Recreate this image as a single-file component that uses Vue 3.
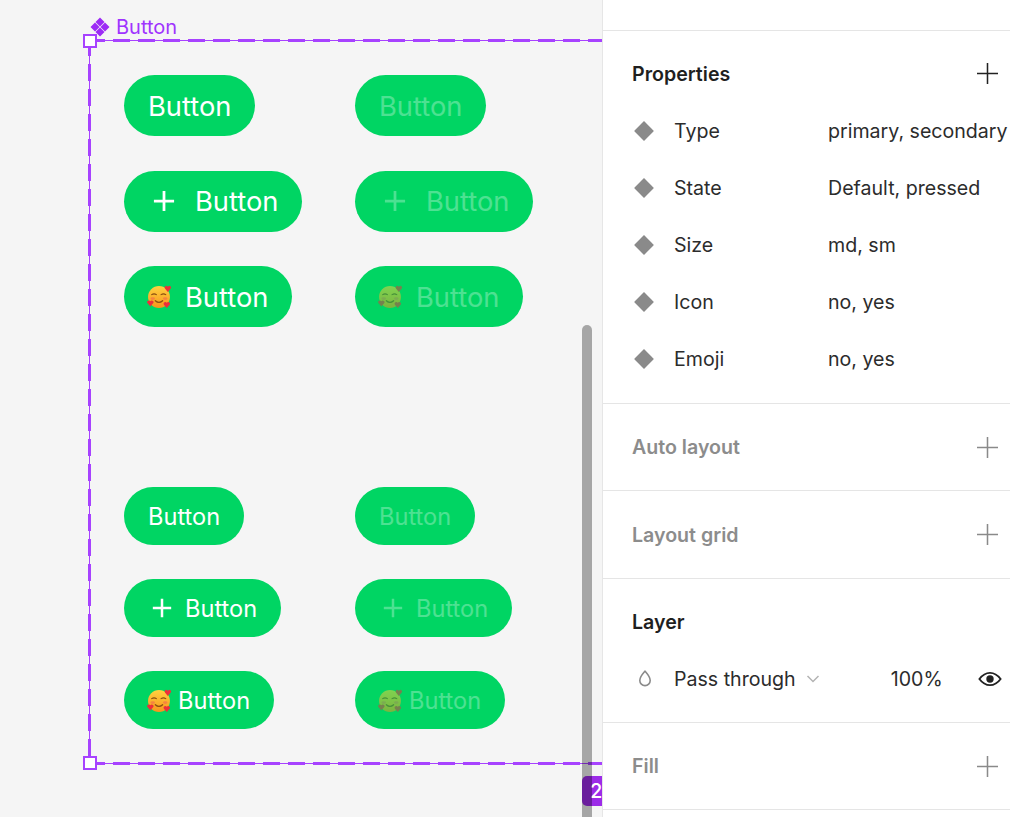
<template>
  <div class="app">
    <svg class="defs" width="0" height="0">
      <defs>
        <linearGradient id="face" x1="0" y1="0" x2="0" y2="1">
          <stop offset="0" stop-color="#ffd23f" />
          <stop offset="1" stop-color="#f7941d" />
        </linearGradient>
      </defs>
      <symbol id="emoji" viewBox="0 0 24 24">
        <circle cx="11.500" cy="12.500" r="10.500" fill="url(#face)" />
        <path d="M4.500 10.200q2.300-1.500 4.500 0M13.500 10.200q2.300-1.500 4.500 0" fill="none" stroke="#8a4f10" stroke-width="1.100" stroke-linecap="round" />
        <path d="M8 16q3.500 3.200 7 0" fill="none" stroke="#8a4f10" stroke-width="1.200" stroke-linecap="round" />
        <ellipse cx="5.500" cy="14" rx="2.200" ry="1.300" fill="#f5843f" />
        <ellipse cx="17.500" cy="14" rx="2.200" ry="1.300" fill="#f5843f" />
        <path transform="translate(20 4.500) scale(.85)" d="M0 3.600-3.300-.2a1.900 1.900 0 0 1 2.700-2.600l.6.6.6-.6a1.900 1.900 0 0 1 2.700 2.600z" fill="#ec2f3b" />
        <path transform="translate(3.200 18.500) scale(.85)" d="M0 3.600-3.300-.2a1.900 1.900 0 0 1 2.700-2.600l.6.6.6-.6a1.900 1.900 0 0 1 2.700 2.600z" fill="#ec2f3b" />
        <path transform="translate(19 20) scale(.85)" d="M0 3.600-3.300-.2a1.900 1.900 0 0 1 2.700-2.600l.6.6.6-.6a1.900 1.900 0 0 1 2.700 2.600z" fill="#ec2f3b" />
      </symbol>
    </svg>

    <div class="canvas">
      <div class="frame-label">
        <svg class="component-icon" viewBox="0 0 20 20">
          <path d="M10 .5l4.500 4.500L10 9.500 5.500 5zM5 5.500L9.500 10 5 14.500.5 10zM15 5.500l4.500 4.500-4.500 4.500L10.500 10zM10 10.500l4.500 4.500-4.500 4.500L5.500 15z" />
        </svg>
        <span>Button</span>
      </div>

      <div class="frame">
        <div class="buttons large">
          <div v-for="b in buttons" :key="'lg' + b.id" :class="['btn', { off: b.off }]">
            <svg v-if="b.icon === 'plus'" class="plus" viewBox="0 0 24 24">
              <path d="M12 1v22M1 12h22" />
            </svg>
            <svg v-if="b.icon === 'emoji'" class="emoji"><use href="#emoji" /></svg>
            <span class="btn-text">Button</span>
          </div>
        </div>
        <div class="buttons small">
          <div v-for="b in buttons" :key="'sm' + b.id" :class="['btn', { off: b.off }]">
            <svg v-if="b.icon === 'plus'" class="plus" viewBox="0 0 24 24">
              <path d="M12 1v22M1 12h22" />
            </svg>
            <svg v-if="b.icon === 'emoji'" class="emoji"><use href="#emoji" /></svg>
            <span class="btn-text">Button</span>
          </div>
        </div>
        <i class="handle top-left"></i>
        <i class="handle bottom-left"></i>
      </div>

      <div class="badge">2</div>
      <div class="scrollbar"></div>
    </div>

    <aside class="panel">
      <div class="top-strip"></div>

      <section class="section props">
        <div class="title-row">
          <span class="title">Properties</span>
          <svg class="add dark" viewBox="0 0 22 22"><path d="M11 0v22M0 11h22" /></svg>
        </div>
        <div v-for="p in properties" :key="p.name" class="prop-row">
          <i class="prop-diamond"></i>
          <span class="prop-name">{{ p.name }}</span>
          <span class="prop-value">{{ p.value }}</span>
        </div>
      </section>

      <section class="section collapsed">
        <span class="title muted">Auto layout</span>
        <svg class="add" viewBox="0 0 22 22"><path d="M11 0v22M0 11h22" /></svg>
      </section>

      <section class="section collapsed">
        <span class="title muted">Layout grid</span>
        <svg class="add" viewBox="0 0 22 22"><path d="M11 0v22M0 11h22" /></svg>
      </section>

      <section class="section layer">
        <div class="layer-title"><span class="title">Layer</span></div>
        <div class="layer-row">
          <svg class="drop" viewBox="0 0 16 20">
            <path d="M8 2.200c2.400 2.800 5.200 5.600 5.200 9.200a5.200 5.200 0 0 1-10.400 0c0-3.600 2.800-6.400 5.200-9.200z" />
          </svg>
          <span class="blend">Pass through</span>
          <svg class="chevron" viewBox="0 0 14 8"><path d="M1.500 1l5.500 5.500L12.500 1" /></svg>
          <span class="opacity">100%</span>
          <svg class="eye" viewBox="0 0 26 16">
            <path class="eye-line" d="M1.500 8C5 3.300 8.800 1.300 13 1.300S21 3.300 24.500 8C21 12.700 17.200 14.700 13 14.700S5 12.700 1.500 8z" />
            <circle cx="13" cy="8" r="4" />
          </svg>
        </div>
      </section>

      <section class="section collapsed last">
        <span class="title muted">Fill</span>
        <svg class="add" viewBox="0 0 22 22"><path d="M11 0v22M0 11h22" /></svg>
      </section>
    </aside>
  </div>
</template>

<script setup>
const buttons = [
  { id: 1, icon: null, off: false },
  { id: 2, icon: null, off: true },
  { id: 3, icon: 'plus', off: false },
  { id: 4, icon: 'plus', off: true },
  { id: 5, icon: 'emoji', off: false },
  { id: 6, icon: 'emoji', off: true }
]

const properties = [
  { name: 'Type', value: 'primary, secondary' },
  { name: 'State', value: 'Default, pressed' },
  { name: 'Size', value: 'md, sm' },
  { name: 'Icon', value: 'no, yes' },
  { name: 'Emoji', value: 'no, yes' }
]
</script>

<style>
html, body {
  margin: 0;
  overflow: hidden;
}
</style>

<style scoped>
.app {
  display: flex;
  width: 1010px;
  height: 817px;
  overflow: hidden;
  font-family: Inter, "Liberation Sans", sans-serif;
  background: #f5f5f5;
}

.defs {
  position: absolute;
}

.canvas {
  position: relative;
  flex: none;
  width: 602px;
  height: 817px;
  overflow: hidden;
  background: #f5f5f5;
}

.frame-label {
  position: absolute;
  left: 90px;
  top: 16px;
  display: flex;
  align-items: center;
  gap: 6px;
  color: #a033ff;
  font-size: 20px;
  line-height: 22px;
}

.component-icon {
  width: 20px;
  height: 20px;
  fill: #9c2bf5;
}

.frame {
  position: absolute;
  left: 88px;
  top: 39px;
  box-sizing: border-box;
  width: 560px;
  height: 726px;
  padding: 36px 0 0 36px;
}

/* thin selection line */
.frame::before {
  content: "";
  position: absolute;
  inset: 1px;
  border: 1px solid #a742ff;
}

/* thick dashes laid over the line */
.frame::after {
  content: "";
  position: absolute;
  inset: 0;
  background:
    linear-gradient(90deg, #a742ff 17px, transparent 17px) 0 0 / 25px 3px repeat-x,
    linear-gradient(90deg, #a742ff 17px, transparent 17px) 0 100% / 25px 3px repeat-x,
    linear-gradient(#a742ff 17px, transparent 17px) 0 0 / 3px 25px repeat-y;
}

.buttons {
  display: grid;
  grid-template-columns: 231px 231px;
  justify-items: start;
}

.large {
  row-gap: 34.5px;
  margin-bottom: 160px;
}

.small {
  row-gap: 34px;
}

.btn {
  display: flex;
  align-items: center;
  box-sizing: border-box;
  height: 61px;
  padding: 0 24px;
  border-radius: 31px;
  background: #00d563;
  color: #fff;
  font-size: 27.3px;
  line-height: 32px;
}

.btn-text {
  margin-top: 2px;
}

.large .btn {
  gap: 20px;
}

.small .btn {
  height: 58px;
  font-size: 23.6px;
  gap: 13px;
}

.large .btn:nth-child(n + 5) {
  gap: 13px;
}

.small .btn:nth-child(n + 5) {
  gap: 6px;
}

.plus {
  width: 22px;
  height: 22px;
  margin-left: 5px;
  fill: none;
  stroke: #fff;
  stroke-width: 3;
}

.small .plus {
  width: 20px;
  height: 20px;
  margin-left: 4px;
}

.emoji {
  flex: none;
  width: 25px;
  height: 25px;
  margin-left: -1px;
}

.off .btn-text,
.off .plus {
  opacity: 0.3;
}

.off .emoji {
  opacity: 0.5;
}

.handle {
  position: absolute;
  z-index: 1;
  box-sizing: border-box;
  width: 14px;
  height: 14px;
  background: #fff;
  border: 2px solid #a742ff;
}

.top-left {
  left: -5px;
  top: -5px;
}

.bottom-left {
  left: -5px;
  bottom: -5px;
}

.badge {
  position: absolute;
  left: 582px;
  top: 776px;
  width: 20px;
  height: 30px;
  padding-left: 8px;
  box-sizing: border-box;
  border-radius: 5px 0 0 5px;
  background: #9c2be8;
  color: #fff;
  font-size: 20px;
  font-weight: 500;
  line-height: 30px;
}

.scrollbar {
  position: absolute;
  left: 582px;
  top: 325px;
  width: 10px;
  height: 500px;
  border-radius: 5px;
  background: rgba(0, 0, 0, 0.32);
}

.panel {
  flex: 1;
  min-width: 0;
  background: #fff;
  border-left: 1px solid #e6e6e6;
  color: #2c2c2c;
}

.top-strip {
  height: 30px;
}

.section {
  box-sizing: border-box;
  border-top: 1px solid #e5e5e5;
  padding: 0 12px 0 29px;
}

.title {
  font-size: 19.6px;
  font-weight: 600;
  color: #1f1f1f;
}

.muted {
  color: #8c8c8c;
}

.props {
  height: 373px;
  padding-top: 14px;
}

.title-row,
.prop-row {
  display: flex;
  align-items: center;
  height: 57px;
}

.title-row {
  justify-content: space-between;
}

.add {
  flex: none;
  width: 21px;
  height: 21px;
  fill: none;
  stroke: #8a8a8a;
  stroke-width: 1.6;
}

.add.dark {
  stroke: #222;
}

.prop-row {
  font-size: 19.6px;
  white-space: nowrap;
}

.prop-diamond {
  flex: none;
  width: 14px;
  height: 14px;
  margin: 0 23px 0 5px;
  background: #8a8a8a;
  transform: rotate(45deg);
}

.prop-name {
  flex: none;
  width: 154px;
}

.collapsed {
  display: flex;
  align-items: center;
  justify-content: space-between;
  height: 87px;
}

.collapsed:nth-of-type(3) {
  height: 88px;
}

.collapsed.last {
  height: 88px;
  border-bottom: 1px solid #e5e5e5;
}

.layer {
  height: 144px;
  padding-top: 14px;
}

.layer-title {
  display: flex;
  align-items: center;
  height: 57px;
}

.layer-row {
  display: flex;
  align-items: center;
  height: 57px;
  font-size: 19.6px;
  white-space: nowrap;
}

.drop {
  flex: none;
  width: 16px;
  height: 20px;
  margin: 0 21px 0 5px;
  fill: none;
  stroke: #8a8a8a;
  stroke-width: 1.6;
}

.chevron {
  flex: none;
  width: 14px;
  height: 8px;
  margin-left: 10px;
  fill: none;
  stroke: #b3b3b3;
  stroke-width: 1.5;
}

.opacity {
  flex: none;
  margin-left: 71px;
}

.eye {
  flex: none;
  width: 24px;
  height: 16px;
  margin-left: 35px;
  fill: #222;
}

.eye-line {
  fill: none;
  stroke: #222;
  stroke-width: 2;
}
</style>
